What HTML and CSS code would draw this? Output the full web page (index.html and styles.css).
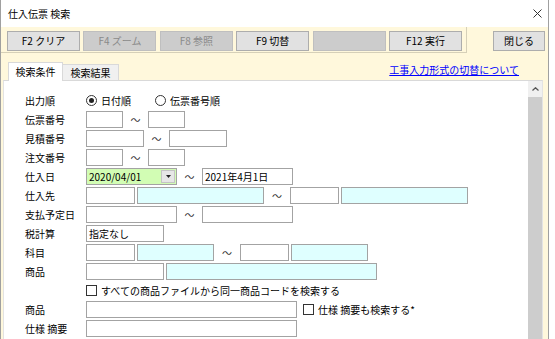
FILE: index.html
```html
<!DOCTYPE html>
<html lang="ja">
<head>
<meta charset="utf-8">
<title>仕入伝票 検索</title>
<link rel="stylesheet" href="styles.css">
</head>
<body>
<div class="window">
  <div class="titlebar">
    <span class="title">仕入伝票 検索</span>
    <svg class="close" viewBox="0 0 9 9" width="9" height="9"><path d="M0.5 0.5 L8.5 8.5 M8.5 0.5 L0.5 8.5" stroke="#333" stroke-width="1" fill="none"/></svg>
  </div>
  <div class="form">
    <div class="toolbar">
      <div class="fgroup">
        <div class="fbtn">F2 クリア</div>
        <div class="fbtn off">F4 ズーム</div>
        <div class="fbtn off">F8 参照</div>
        <div class="fbtn">F9 切替</div>
        <div class="fbtn off"></div>
        <div class="fbtn">F12 実行</div>
      </div>
      <div class="fbtn closebtn">閉じる</div>
    </div>
    <div class="tabrow">
      <div class="tab active">検索条件</div>
      <div class="tab">検索結果</div>
      <a class="link" href="#">工事入力形式の切替について</a>
    </div>
    <div class="panel">
      <div class="content">
        <div class="row">
          <span class="lbl">出力順</span>
          <span class="radio on"></span><span class="opt">日付順</span>
          <span class="radio second"></span><span class="opt">伝票番号順</span>
        </div>
        <div class="row">
          <span class="lbl">伝票番号</span>
          <span class="in w37"></span><span class="tilde">～</span><span class="in w37"></span>
        </div>
        <div class="row">
          <span class="lbl">見積番号</span>
          <span class="in w58"></span><span class="tilde">～</span><span class="in w58"></span>
        </div>
        <div class="row">
          <span class="lbl">注文番号</span>
          <span class="in w37"></span><span class="tilde">～</span><span class="in w37"></span>
        </div>
        <div class="row">
          <span class="lbl">仕入日</span>
          <span class="in w91 gr"><span class="val">2020/04/01</span><span class="dd"><svg viewBox="0 0 5 3" width="5" height="3"><path d="M0 0 H5 L2.5 3 Z" fill="#222"/></svg></span></span>
          <span class="tilde">～</span>
          <span class="in w91">2021年4月1日</span>
        </div>
        <div class="row">
          <span class="lbl">仕入先</span>
          <span class="in w49"></span><span class="in w127 cy"></span><span class="tilde wide">～</span><span class="in w49"></span><span class="in w127 cy"></span>
        </div>
        <div class="row">
          <span class="lbl">支払予定日</span>
          <span class="in w91"></span><span class="tilde">～</span><span class="in w91"></span>
        </div>
        <div class="row">
          <span class="lbl">税計算</span>
          <span class="in w78">指定なし</span>
        </div>
        <div class="row">
          <span class="lbl">科目</span>
          <span class="in w49"></span><span class="in w77 cy"></span><span class="tilde wide">～</span><span class="in w49"></span><span class="in w77 cy"></span>
        </div>
        <div class="row">
          <span class="lbl">商品</span>
          <span class="in w78"></span><span class="in w211 cy"></span>
        </div>
        <div class="row">
          <span class="lbl"></span>
          <span class="check"></span><span class="opt">すべての商品ファイルから同一商品コードを検索する</span>
        </div>
        <div class="row">
          <span class="lbl">商品</span>
          <span class="in w211"></span><span class="check after"></span><span class="opt">仕様 摘要も検索する*</span>
        </div>
        <div class="row">
          <span class="lbl">仕様 摘要</span>
          <span class="in w211"></span>
        </div>
      </div>
      <div class="scrollbar">
        <div class="sb-up"><svg viewBox="0 0 7 4" width="7" height="4"><path d="M0.5 3.5 L3.5 0.7 L6.5 3.5" stroke="#555" stroke-width="1.2" fill="none"/></svg></div>
        <div class="sb-thumb"></div>
      </div>
    </div>
  </div>
</div>
</body>
</html>
```
FILE: styles.css
```css
* { box-sizing: border-box; }
html, body { margin: 0; padding: 0; }
body {
  width: 555px;
  height: 339px;
  overflow: hidden;
  background: #ffffff;
  font-family: "Noto Sans CJK JP", "Noto Sans", sans-serif;
  font-size: 10px;
  line-height: 12px;
  color: #000;
}
.window {
  width: 549px;
  height: 339px;
  border-left: 1px solid #a0a0a0;
  border-right: 1px solid #a0a0a0;
  display: flex;
  flex-direction: column;
  background: #fff;
}
.titlebar {
  height: 27px;
  flex: none;
  display: flex;
  align-items: center;
  justify-content: space-between;
  padding: 0 6px 0 7px;
  background: #fff;
}
.close { display: block; }
.form {
  flex: 1;
  min-height: 0;
  background: #fff8dc;
  display: flex;
  flex-direction: column;
}
.toolbar {
  height: 26px;
  flex: none;
  display: flex;
}
.fgroup {
  width: 466px;
  height: 26px;
  display: flex;
  gap: 3.4px;
  padding: 4px 0 0 6px;
  border-right: 1px solid #d6d0b8;
  border-bottom: 1px solid #d6d0b8;
}
.fbtn {
  width: 73px;
  height: 20px;
  flex: none;
  background: #e1e1e1;
  border: 1px solid #adadad;
  display: flex;
  align-items: center;
  justify-content: center;
  white-space: nowrap;
}
.fbtn.off {
  background: #cccccc;
  border-color: #bfbfbf;
  color: #8a8a8a;
}
.closebtn {
  width: 52px;
  margin: 4px 0 0 26px;
}
.tabrow {
  height: 27px;
  flex: none;
  display: flex;
  align-items: flex-end;
  padding-left: 7px;
}
.tab {
  width: 56px;
  height: 16px;
  background: #f0f0f0;
  border: 1px solid #d9d9d9;
  border-bottom: none;
  border-left: none;
  display: flex;
  align-items: center;
  justify-content: center;
}
.tab.active {
  width: 55px;
  height: 19px;
  margin-bottom: -1px;
  background: #fff;
  border-left: 1px solid #d9d9d9;
  position: relative;
  z-index: 1;
  padding-top: 0;
}
.link {
  margin-left: auto;
  margin-right: 29px;
  align-self: flex-start;
  margin-top: 11px;
  line-height: 12px;
  color: #0000ff;
  text-decoration: underline;
}
.panel {
  flex: 1;
  min-height: 0;
  width: 540px;
  margin-left: 2px;
  background: #fff;
  border-top: 1px solid #d9d9d9;
  border-left: 1px solid #e3e3e3;
  border-right: 1px solid #e3e3e3;
  display: flex;
  overflow: hidden;
}
.content {
  flex: 1;
  padding: 11px 0 0 21px;
  display: flex;
  flex-direction: column;
  gap: 2px;
}
.row {
  height: 17px;
  flex: none;
  display: flex;
  align-items: center;
  white-space: nowrap;
}
.lbl {
  width: 61px;
  flex: none;
}
.in {
  height: 17px;
  flex: none;
  border: 1px solid #a3a3a3;
  background: #fff;
  display: flex;
  align-items: center;
  padding-left: 2px;
}
.in + .in { margin-left: 2px; }
.cy { background: #dfffff; }
.gr { background: #d2fdb4; justify-content: space-between; }
.w37 { width: 37px; }
.w49 { width: 49px; }
.w58 { width: 58px; }
.w77 { width: 77px; }
.w78 { width: 78px; }
.w91 { width: 91px; }
.w127 { width: 127px; }
.w211 { width: 211px; }
.dd {
  width: 14px;
  height: 13px;
  margin-right: 1px;
  background: #e6e6e6;
  border: 1px solid #c4c4c4;
  display: flex;
  align-items: center;
  justify-content: center;
}
.tilde {
  width: 25px;
  flex: none;
  text-align: center;
  color: #333;
}
.tilde.wide { width: 26px; }
.radio {
  width: 11px;
  height: 11px;
  flex: none;
  border: 1px solid #333;
  border-radius: 50%;
  background: #fff;
  display: flex;
  align-items: center;
  justify-content: center;
}
.radio.on::after {
  content: "";
  width: 5px;
  height: 5px;
  border-radius: 50%;
  background: #222;
}
.radio.second { margin-left: 24px; }
.opt { margin-left: 4px; }
.check {
  width: 11px;
  height: 11px;
  flex: none;
  border: 1px solid #333;
  background: #fff;
}
.check.after { margin-left: 6px; }
.scrollbar {
  width: 14px;
  flex: none;
  display: flex;
  flex-direction: column;
}
.sb-up {
  height: 16px;
  flex: none;
  background: #f0f0f0;
  display: flex;
  align-items: center;
  justify-content: center;
}
.sb-thumb {
  flex: 1;
  background: #cdcdcd;
}
```
